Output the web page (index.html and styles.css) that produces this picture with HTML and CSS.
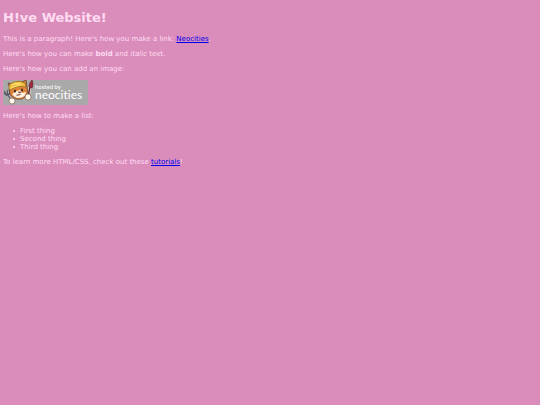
FILE: index.html
```html
<!DOCTYPE html>
<html lang="en">

<head>
    <meta charset="UTF-8">
    <meta name="viewport" content="width=device-width, initial-scale=1.0">
    <title>H!ve Website!</title>
    <link rel="stylesheet" href="styles.css">
</head>

<body>
    <h1>H!ve Website!</h1>

    <p>This is a paragraph! Here's how you make a link: <a href="https://neocities.org">Neocities</a>.</p>

    <p>Here's how you can make <strong>bold</strong> and <em>italic</em> text.</p>

    <p>Here's how you can add an image:</p>

    <!-- Neocities badge -->
    <svg class="badge" viewBox="0 0 85 25" role="img" aria-label="Hosted by Neocities">
        <rect width="85" height="25" rx="1" fill="#a9a9a9"/>
        <!-- Fork -->
        <path d="M1 11l3 4 3-1-1-5M4 10l1 5 4 7M1 13l3 3" fill="none" stroke="#c9c5cc" stroke-width="2.2"/>
        <path d="M1 11l3 4 3-1-1-5M4 10l1 5 4 7M1 13l3 3" fill="none" stroke="#5c5c68" stroke-width="1.4"/>
        <!-- Paintbrush -->
        <path d="M27 7l-2 10" stroke="#fff0e8" stroke-width="3"/>
        <path d="M27 7l-2 10" stroke="#4d2a25" stroke-width="1.6"/>
        <path d="M29 0q2 4 0 8l-3-1q0-4 3-7z" fill="#a6293b" stroke="#67303a" stroke-width="0.8"/>
        <!-- Cat head -->
        <path d="M7 8L5 3l5 1q5-3 9-2l4-2 1 7q2 6-2 10-5 4-11 1-6-3-4-10z" fill="#df8338" stroke="#693f2c" stroke-width="0.8"/>
        <path d="M9 14l5-3 3-1 2 3 4-1q0 3-3 5-5 2-8 0z" fill="#fff0df"/>
        <path d="M6 9q-1-5 5-7 6-2 11 1l1 4q-8-2-16 3z" fill="#efbd40" stroke="#97702b" stroke-width="0.8"/>
        <path d="M8 5l10-2M11 3l7 2M8 8l8-3" stroke="#ffe47a" stroke-width="0.8"/>
        <ellipse cx="12" cy="11" rx="1" ry="1.5" fill="#382c2c"/>
        <ellipse cx="19" cy="10" rx="1" ry="1.5" fill="#382c2c"/>
        <path d="M15 12h3l-1 1zM13 15q3 1 5-1" fill="#72352c" stroke="#72352c" stroke-width="0.5"/>
        <!-- Paws -->
        <circle cx="9" cy="21" r="3" fill="#fff7ed" stroke="#76543f" stroke-width="0.6"/>
        <circle cx="25" cy="17" r="3" fill="#fff7ed" stroke="#76543f" stroke-width="0.6"/>
        <text class="badge-small" x="32" y="9">hosted by</text>
        <text class="badge-name" x="32" y="19">neocities</text>
    </svg>

    <p>Here's how to make a list:</p>

    <ul>
        <li>First thing</li>
        <li>Second thing</li>
        <li>Third thing</li>
    </ul>

    <p>To learn more HTML/CSS, check out these <a href="https://neocities.org/tutorials">tutorials</a>!</p>
</body>

</html>
```
FILE: styles.css
```css
body {
    background-color: #da8dbb;
    color: #ffdcf2;
    font-family: Verdana, "DejaVu Sans", sans-serif;
    font-size: 7px;
    line-height: 8px;
    margin: 9px 3px;
}

h1 {
    font-size: 13px;
    line-height: 17px;
    margin: 0 0 9px;
}

p {
    margin: 7px 0;
}

a {
    color: #0000ee;
}

ul {
    list-style: none;
    margin: 7px 0;
    padding-left: 10px;
}

li {
    display: flex;
    align-items: center;
    gap: 5px;
}

/* Bullets */
li::before {
    content: "";
    width: 2px;
    height: 2px;
    border-radius: 50%;
    background-color: #ffdcf2;
}

/* Hosted by badge */
.badge {
    display: block;
    width: 85px;
    height: 25px;
}

.badge-small,
.badge-name {
    fill: #ffffff;
    font-family: Lato, "Open Sans", sans-serif;
    font-variant-ligatures: none;
}

.badge-small {
    font-size: 6px;
}

.badge-name {
    font-size: 12px;
}
```
